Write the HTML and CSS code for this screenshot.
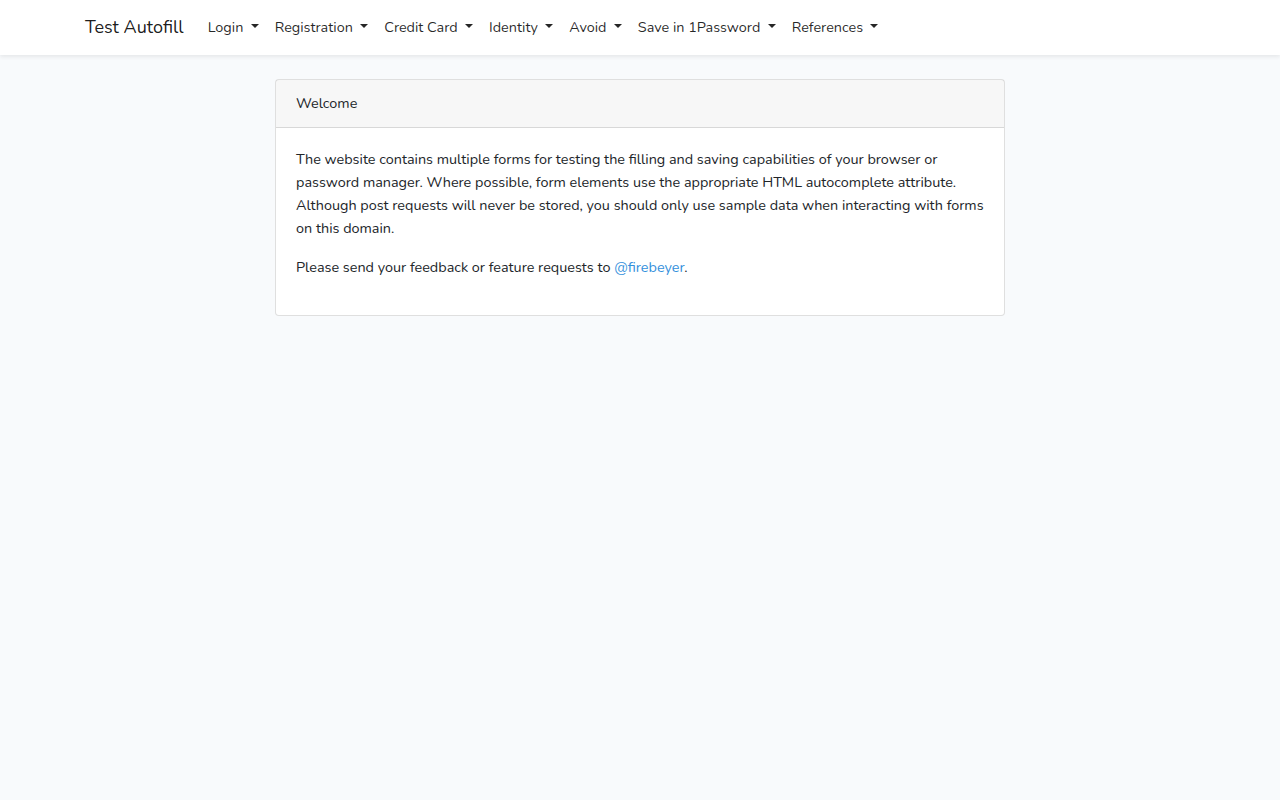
FILE: index.html
```html
<!DOCTYPE html>
<html lang="en">
<head>
    <meta charset="UTF-8">
    <meta name="viewport" content="width=device-width, initial-scale=1.0">
    <title>Test Autofill</title>
    <link rel="stylesheet" href="styles.css">
</head>
<body>
    <nav class="navbar">
        <div class="container navbar-inner">
            <a class="navbar-brand" href="#">Test Autofill</a>
            <ul class="navbar-nav">
                <li><a class="nav-link" href="#">Login <span class="caret"></span></a></li>
                <li><a class="nav-link" href="#">Registration <span class="caret"></span></a></li>
                <li><a class="nav-link" href="#">Credit Card <span class="caret"></span></a></li>
                <li><a class="nav-link" href="#">Identity <span class="caret"></span></a></li>
                <li><a class="nav-link" href="#">Avoid <span class="caret"></span></a></li>
                <li><a class="nav-link" href="#">Save in 1Password <span class="caret"></span></a></li>
                <li><a class="nav-link" href="#">References <span class="caret"></span></a></li>
            </ul>
        </div>
    </nav>

    <main class="page-main">
        <div class="container">
            <div class="card">
                <div class="card-header">Welcome</div>
                <div class="card-body">
                    <p>The website contains multiple forms for testing the filling and saving capabilities of your browser or password manager. Where possible, form elements use the appropriate HTML autocomplete attribute. Although post requests will never be stored, you should only use sample data when interacting with forms on this domain.</p>
                    <p>Please send your feedback or feature requests to <a href="#">@firebeyer</a>.</p>
                </div>
            </div>
        </div>
    </main>
</body>
</html>
```

FILE: styles.css
```css
* {
    box-sizing: border-box;
}

body {
    margin: 0;
    font-family: "Nunito", "Lato", "Noto Sans", sans-serif;
    font-size: 14.4px;
    line-height: 1.6;
    color: #212529;
    background-color: #f8fafc;
}

a {
    color: #3490dc;
    text-decoration: none;
}

.container {
    width: 1140px;
    margin: 0 auto;
    padding: 0 15px;
}

/* barra de navegación */
.navbar {
    background-color: #fff;
    padding: 8px 0;
    box-shadow: 0 2px 4px rgba(0, 0, 0, 0.075);
}

.navbar-inner {
    display: flex;
    align-items: center;
}

.navbar-brand {
    color: rgba(0, 0, 0, 0.9);
    font-size: 18px;
    padding: 5px 0;
    margin-right: 16px;
    white-space: nowrap;
}

.navbar-nav {
    display: flex;
    list-style: none;
    margin: 0;
    padding: 0;
}

.nav-link {
    display: block;
    padding: 8px;
    color: rgba(0, 0, 0, 0.85);
    white-space: nowrap;
}

/* triángulo del desplegable */
.caret {
    display: inline-block;
    margin-left: 0.255em;
    vertical-align: 0.255em;
    border-top: 0.3em solid;
    border-right: 0.3em solid transparent;
    border-left: 0.3em solid transparent;
    border-bottom: 0;
}

/* contenido */
.page-main {
    padding: 24px 0;
}

.card {
    width: 730px;
    margin: 0 auto;
    background-color: #fff;
    border: 1px solid rgba(0, 0, 0, 0.125);
    border-radius: 4px;
}

.card-header {
    padding: 12px 20px;
    background-color: rgba(0, 0, 0, 0.03);
    border-bottom: 1px solid rgba(0, 0, 0, 0.125);
}

.card-body {
    padding: 20px;
}

.card-body p {
    margin: 0 0 16px;
}
```
